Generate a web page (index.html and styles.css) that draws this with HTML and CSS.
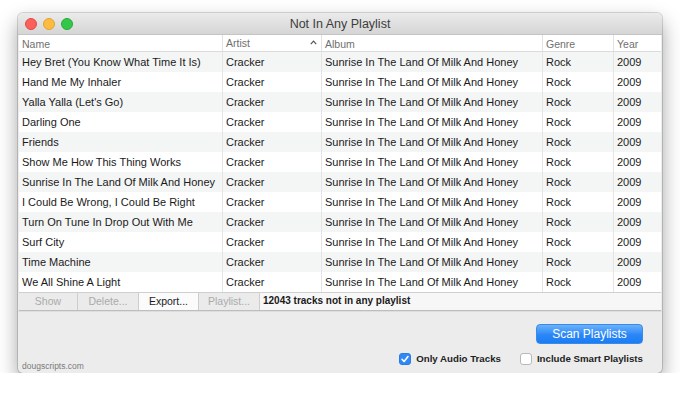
FILE: index.html
```html
<!DOCTYPE html>
<html>
<head>
<meta charset="utf-8">
<link rel="stylesheet" href="styles.css">
</head>
<body>
<div class="window">
  <div class="titlebar">
    <div class="lights">
      <span class="light red"></span>
      <span class="light yellow"></span>
      <span class="light green"></span>
    </div>
    <div class="title">Not In Any Playlist</div>
  </div>
  <div class="table">
    <div class="row head">
      <div class="cell">Name</div>
      <div class="cell sorted">Artist<svg class="arrow" width="7" height="5" viewBox="0 0 7 5"><polyline points="0.8,4.2 3.5,1.2 6.2,4.2" fill="none" stroke="#555" stroke-width="1.2"/></svg></div>
      <div class="cell">Album</div>
      <div class="cell">Genre</div>
      <div class="cell">Year</div>
    </div>
    <div class="row"><div class="cell">Hey Bret (You Know What Time It Is)</div><div class="cell">Cracker</div><div class="cell">Sunrise In The Land Of Milk And Honey</div><div class="cell">Rock</div><div class="cell">2009</div></div>
    <div class="row"><div class="cell">Hand Me My Inhaler</div><div class="cell">Cracker</div><div class="cell">Sunrise In The Land Of Milk And Honey</div><div class="cell">Rock</div><div class="cell">2009</div></div>
    <div class="row"><div class="cell">Yalla Yalla (Let's Go)</div><div class="cell">Cracker</div><div class="cell">Sunrise In The Land Of Milk And Honey</div><div class="cell">Rock</div><div class="cell">2009</div></div>
    <div class="row"><div class="cell">Darling One</div><div class="cell">Cracker</div><div class="cell">Sunrise In The Land Of Milk And Honey</div><div class="cell">Rock</div><div class="cell">2009</div></div>
    <div class="row"><div class="cell">Friends</div><div class="cell">Cracker</div><div class="cell">Sunrise In The Land Of Milk And Honey</div><div class="cell">Rock</div><div class="cell">2009</div></div>
    <div class="row"><div class="cell">Show Me How This Thing Works</div><div class="cell">Cracker</div><div class="cell">Sunrise In The Land Of Milk And Honey</div><div class="cell">Rock</div><div class="cell">2009</div></div>
    <div class="row"><div class="cell">Sunrise In The Land Of Milk And Honey</div><div class="cell">Cracker</div><div class="cell">Sunrise In The Land Of Milk And Honey</div><div class="cell">Rock</div><div class="cell">2009</div></div>
    <div class="row"><div class="cell">I Could Be Wrong, I Could Be Right</div><div class="cell">Cracker</div><div class="cell">Sunrise In The Land Of Milk And Honey</div><div class="cell">Rock</div><div class="cell">2009</div></div>
    <div class="row"><div class="cell">Turn On Tune In Drop Out With Me</div><div class="cell">Cracker</div><div class="cell">Sunrise In The Land Of Milk And Honey</div><div class="cell">Rock</div><div class="cell">2009</div></div>
    <div class="row"><div class="cell">Surf City</div><div class="cell">Cracker</div><div class="cell">Sunrise In The Land Of Milk And Honey</div><div class="cell">Rock</div><div class="cell">2009</div></div>
    <div class="row"><div class="cell">Time Machine</div><div class="cell">Cracker</div><div class="cell">Sunrise In The Land Of Milk And Honey</div><div class="cell">Rock</div><div class="cell">2009</div></div>
    <div class="row"><div class="cell">We All Shine A Light</div><div class="cell">Cracker</div><div class="cell">Sunrise In The Land Of Milk And Honey</div><div class="cell">Rock</div><div class="cell">2009</div></div>
  </div>
  <div class="toolbar">
    <div class="tbtn disabled w-show">Show</div>
    <div class="tbtn disabled w-delete">Delete...</div>
    <div class="tbtn active w-export">Export...</div>
    <div class="tbtn disabled w-playlist">Playlist...</div>
    <div class="status">12043 tracks not in any playlist</div>
  </div>
  <div class="bottom">
    <div class="credit">dougscripts.com</div>
    <div class="controls">
      <div class="scan">Scan Playlists</div>
      <div class="checks">
        <label class="check"><span class="box on"><svg width="12" height="12" viewBox="0 0 12 12"><polyline points="3,6.3 5.1,8.5 9,3.6" fill="none" stroke="#fff" stroke-width="1.6" stroke-linecap="round" stroke-linejoin="round"/></svg></span>Only Audio Tracks</label>
        <label class="check"><span class="box"></span>Include Smart Playlists</label>
      </div>
    </div>
  </div>
</div>
</body>
</html>
```

FILE: styles.css
```css
html, body {
  margin: 0;
  padding: 0;
  background: #ffffff;
}
body {
  font-family: "Liberation Sans", Arial, sans-serif;
  color: #1a1a1a;
}
.window {
  margin: 13px 0 0 18px;
  width: 644px;
  height: 360px;
  background: #ececec;
  border-radius: 5px;
  overflow: hidden;
  box-shadow: 0 0 0 1px rgba(0,0,0,0.14), 0 9px 20px rgba(0,0,0,0.38);
  display: flex;
  flex-direction: column;
}
.titlebar {
  height: 21px;
  flex: none;
  position: relative;
  background: linear-gradient(#ebebeb, #d5d5d5);
  border-bottom: 1px solid #c4c4c4;
  display: flex;
  align-items: center;
}
.lights {
  display: flex;
  gap: 6px;
  padding-left: 7px;
  margin-top: 1px;
}
.light {
  width: 12px;
  height: 12px;
  border-radius: 50%;
  box-sizing: border-box;
}
.red { background: #fc605b; border: 0.5px solid #de4a45; }
.yellow { background: #fdbc40; border: 0.5px solid #dea236; }
.green { background: #34c84a; border: 0.5px solid #27aa35; }
.title {
  position: absolute;
  left: 0;
  right: 0;
  top: 0;
  line-height: 22px;
  text-align: center;
  font-size: 12.5px;
  color: #3c3c3c;
}
.table {
  margin: 0 1px;
  background: #ffffff;
  flex: none;
}
.row {
  display: grid;
  grid-template-columns: 203px 99px 221px 71px 48px;
  height: 20px;
  font-size: 11px;
  line-height: 20px;
}
.row:nth-child(even) {
  background: #f4f5f5;
}
.row.head {
  height: 17px;
  line-height: 18px;
  font-size: 10.5px;
  color: #6f6f6f;
  background: #ffffff;
  border-bottom: 1px solid #dcdcdc;
  box-sizing: border-box;
}
.row.head .cell + .cell {
  border-left: 1px solid #e2e2e2;
}
.cell {
  padding-left: 3px;
  white-space: nowrap;
  overflow: hidden;
}
.cell + .cell {
  border-left: 1px solid #e4e4e4;
}
.sorted {
  display: flex;
  justify-content: space-between;
  align-items: center;
  padding-right: 4px;
}
.arrow {
  display: block;
  margin-top: -1px;
}
.toolbar {
  margin: 0 1px;
  height: 17px;
  flex: none;
  display: flex;
  background: #f7f7f7;
  border-top: 1px solid #cfcfcf;
  border-bottom: 1px solid #bdbdbd;
  font-size: 10.5px;
  line-height: 16px;
}
.tbtn {
  text-align: center;
  border-right: 1px solid #cdcdcd;
  background: #ebebeb;
  color: #aaaaaa;
  box-sizing: border-box;
}
.tbtn.active {
  background: #fbfbfb;
  color: #1a1a1a;
}
.w-show { width: 59px; }
.w-delete { width: 61px; }
.w-export { width: 60px; }
.w-playlist { width: 61px; }
.status {
  padding-left: 3px;
  font-weight: bold;
  font-size: 10px;
  color: #1a1a1a;
}
.bottom {
  flex: 1;
  display: flex;
  justify-content: space-between;
  align-items: flex-end;
  padding: 12px 19px 2px 4px;
  border-top: 1px solid #dedede;
}
.credit {
  font-size: 8.5px;
  color: #7a7a7a;
  line-height: 10px;
}
.controls {
  align-self: stretch;
  display: flex;
  flex-direction: column;
  align-items: flex-end;
}
.scan {
  width: 107px;
  height: 20px;
  box-sizing: border-box;
  border-radius: 4px;
  background: linear-gradient(#6ab2fb, #2b87f6 55%, #1b7cf4);
  border: 1px solid #3a8ae8;
  color: #ffffff;
  font-size: 12px;
  line-height: 18px;
  text-align: center;
}
.checks {
  display: flex;
  gap: 19px;
  margin-top: 9px;
}
.check {
  display: flex;
  align-items: center;
  gap: 5px;
  font-size: 9.7px;
  font-weight: bold;
  color: #222222;
  line-height: 12px;
}
.box {
  width: 12px;
  height: 12px;
  box-sizing: border-box;
  border-radius: 3px;
  background: #ffffff;
  border: 1px solid #b9b9b9;
  display: block;
}
.box.on {
  background: #2f88f6;
  border: 1px solid #2a7ce2;
}
.box svg {
  display: block;
  margin: -1px;
}
```
